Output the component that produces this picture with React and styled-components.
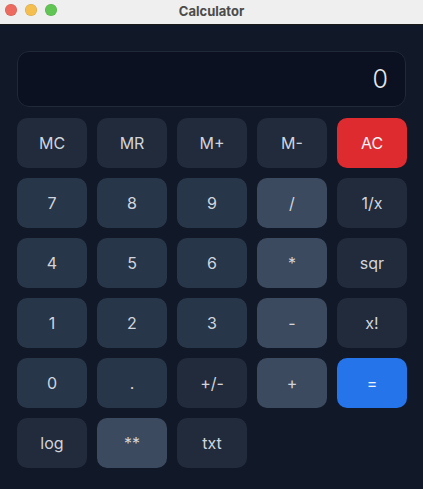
import React, { useState } from "react";
import styled, { createGlobalStyle } from "styled-components";

const GlobalStyle = createGlobalStyle`
  html, body {
    margin: 0;
    padding: 0;
    background: #111827;
  }
  body {
    font-family: Inter, "Noto Sans", sans-serif;
  }
`;

const Window = styled.div`
  width: 423px;
  height: 489px;
  display: flex;
  flex-direction: column;
  background: #111827;
  overflow: hidden;
`;

const TitleBar = styled.div`
  height: 24px;
  flex-shrink: 0;
  position: relative;
  display: flex;
  align-items: center;
  justify-content: center;
  background: #efefef;
  border-bottom: 1px solid #1a1a1a;
`;

const Lights = styled.div`
  position: absolute;
  left: 5px;
  top: 4px;
  display: flex;
  gap: 8px;
`;

const Light = styled.span`
  width: 12px;
  height: 12px;
  border-radius: 50%;
  background: ${(p) => p.color};
  box-shadow: inset 0 0 0 0.5px rgba(0, 0, 0, 0.15);
`;

const Title = styled.div`
  font-size: 13px;
  font-weight: 700;
  color: #4b4b4b;
  margin-top: -2px;
`;

const Body = styled.div`
  padding: 26px 17px 0 17px;
  display: flex;
  flex-direction: column;
  gap: 11px;
`;

const Display = styled.div`
  height: 54px;
  border: 1px solid #1f2937;
  border-radius: 12px;
  background: #0b1120;
  display: flex;
  align-items: center;
  justify-content: flex-end;
  padding: 0 17px;
  font-size: 25px;
  font-weight: 300;
  color: #e5e7eb;
`;

const Keys = styled.div`
  display: grid;
  grid-template-columns: repeat(5, 70px);
  grid-auto-rows: 50px;
  gap: 10px;
`;

const tones = {
  fn: "#212b3b",
  num: "#283649",
  op: "#3b4a5f",
  danger: "#de2b30",
  primary: "#2574e9",
};

const Key = styled.button`
  border: none;
  border-radius: 10px;
  background: ${(p) => tones[p.tone]};
  color: ${(p) => (p.tone === "danger" || p.tone === "primary" ? "#f3f4f6" : "#d1d5db")};
  font-family: Inter, "Noto Sans", sans-serif;
  font-size: 16px;
  font-weight: 400;
  padding: 0;
  cursor: pointer;
`;

const rows = [
  [["MC", "fn"], ["MR", "fn"], ["M+", "fn"], ["M-", "fn"], ["AC", "danger"]],
  [["7", "num"], ["8", "num"], ["9", "num"], ["/", "op"], ["1/x", "fn"]],
  [["4", "num"], ["5", "num"], ["6", "num"], ["*", "op"], ["sqr", "fn"]],
  [["1", "num"], ["2", "num"], ["3", "num"], ["-", "op"], ["x!", "fn"]],
  [["0", "num"], [".", "num"], ["+/-", "fn"], ["+", "op"], ["=", "primary"]],
  [["log", "fn"], ["**", "op"], ["txt", "fn"]],
];

export default function App() {
  const [value] = useState("0");

  return (
    <Window>
      <GlobalStyle />
      <TitleBar>
        <Lights>
          <Light color="#ed6a5e" />
          <Light color="#f5bf4f" />
          <Light color="#61c554" />
        </Lights>
        <Title>Calculator</Title>
      </TitleBar>
      <Body>
        <Display>{value}</Display>
        <Keys>
          {rows.flat().map(([label, tone]) => (
            <Key key={label} tone={tone}>
              {label}
            </Key>
          ))}
        </Keys>
      </Body>
    </Window>
  );
}
